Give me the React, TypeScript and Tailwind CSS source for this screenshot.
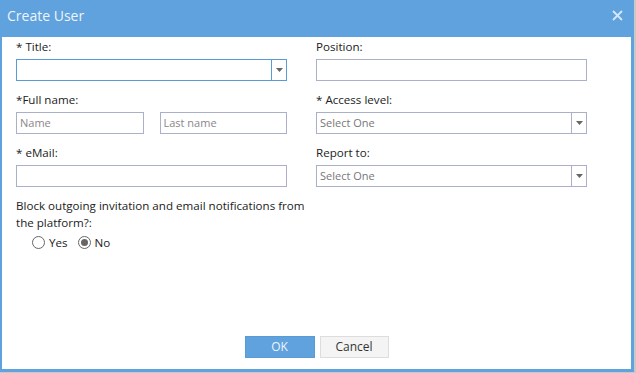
import React from "react";

const font = { fontFamily: '"Open Sans", "Liberation Sans", sans-serif' };

function Select({ value, focused }: { value?: string; focused?: boolean }) {
  return (
    <div
      className={`h-[22px] flex border bg-white ${
        focused ? "border-[#5b9bd5]" : "border-[#a9b0c7]"
      }`}
    >
      <div className="flex-1 px-[3px] text-[11px] leading-[20px] text-[#777]">{value}</div>
      <div
        className={`w-[15px] border-l flex items-center justify-center ${
          focused ? "border-[#5b9bd5]" : "border-[#a9b0c7]"
        }`}
      >
        <svg width="7" height="4" viewBox="0 0 7 4">
          <path d="M0 0 L7 0 L3.5 4 Z" fill="#666" />
        </svg>
      </div>
    </div>
  );
}

function Input({ placeholder }: { placeholder?: string }) {
  return (
    <div className="h-[22px] border border-[#a9b0c7] bg-white px-[3px] text-[11px] leading-[20px] text-[#888]">
      {placeholder}
    </div>
  );
}

function Label({ children }: { children: React.ReactNode }) {
  return <div className="text-[11.6px] leading-[16px] text-[#222] mb-[4px]">{children}</div>;
}

export default function App() {
  return (
    <div className="w-[636px] h-[373px] bg-[#c8c8c8]" style={font}>
      <div className="w-[634px] h-[372px] bg-[#5fa2dd] flex flex-col px-[2px] pr-[3px] pb-[3px]">
        <div className="h-[37px] flex items-center justify-between pl-[5px] pr-[8px] pb-[6px]">
          <span className="text-[14px] text-[#eef4fb]">Create User</span>
          <svg width="11" height="11" viewBox="0 0 11 11">
            <path d="M1 1 L10 10 M10 1 L1 10" stroke="#d6e7f7" strokeWidth="1.8" />
          </svg>
        </div>
        <div className="flex-1 bg-white flex flex-col pl-[14px] pt-[2px]">
          <div className="flex gap-[29px]">
            <div className="w-[271px] flex flex-col">
              <Label>* Title:</Label>
              <Select focused />
              <div className="h-[11px]" />
              <Label>*Full name:</Label>
              <div className="flex gap-[16px]">
                <div className="flex-1">
                  <Input placeholder="Name" />
                </div>
                <div className="flex-1">
                  <Input placeholder="Last name" />
                </div>
              </div>
              <div className="h-[11px]" />
              <Label>* eMail:</Label>
              <Input />
              <div className="h-[10px]" />
              <div className="text-[11.6px] leading-[17px] text-[#222] w-[300px]">
                Block outgoing invitation and email notifications from the platform?:
              </div>
              <div className="flex items-center gap-[10px] pl-[16px] mt-[3px] text-[11.6px] text-[#222]">
                <label className="flex items-center gap-[4px]">
                  <span className="w-[13px] h-[13px] rounded-full border border-[#666] bg-white" />
                  Yes
                </label>
                <label className="flex items-center gap-[4px]">
                  <span className="w-[13px] h-[13px] rounded-full border border-[#666] bg-white flex items-center justify-center">
                    <span className="w-[7px] h-[7px] rounded-full bg-[#666]" />
                  </span>
                  No
                </label>
              </div>
            </div>
            <div className="w-[271px] flex flex-col">
              <Label>Position:</Label>
              <Input />
              <div className="h-[11px]" />
              <Label>* Access level:</Label>
              <Select value="Select One" />
              <div className="h-[11px]" />
              <Label>Report to:</Label>
              <Select value="Select One" />
            </div>
          </div>
          <div className="flex-1" />
          <div className="flex justify-center gap-[5px] pr-[14px] pb-[11px]">
            <button className="w-[70px] h-[22px] bg-[#5fa2dd] border border-[#5b9bd5] text-[12px] text-[#eef4fb]">
              OK
            </button>
            <button className="w-[69px] h-[22px] bg-[#f4f4f4] border border-[#ddd] text-[12px] text-[#333]">
              Cancel
            </button>
          </div>
        </div>
      </div>
    </div>
  );
}
